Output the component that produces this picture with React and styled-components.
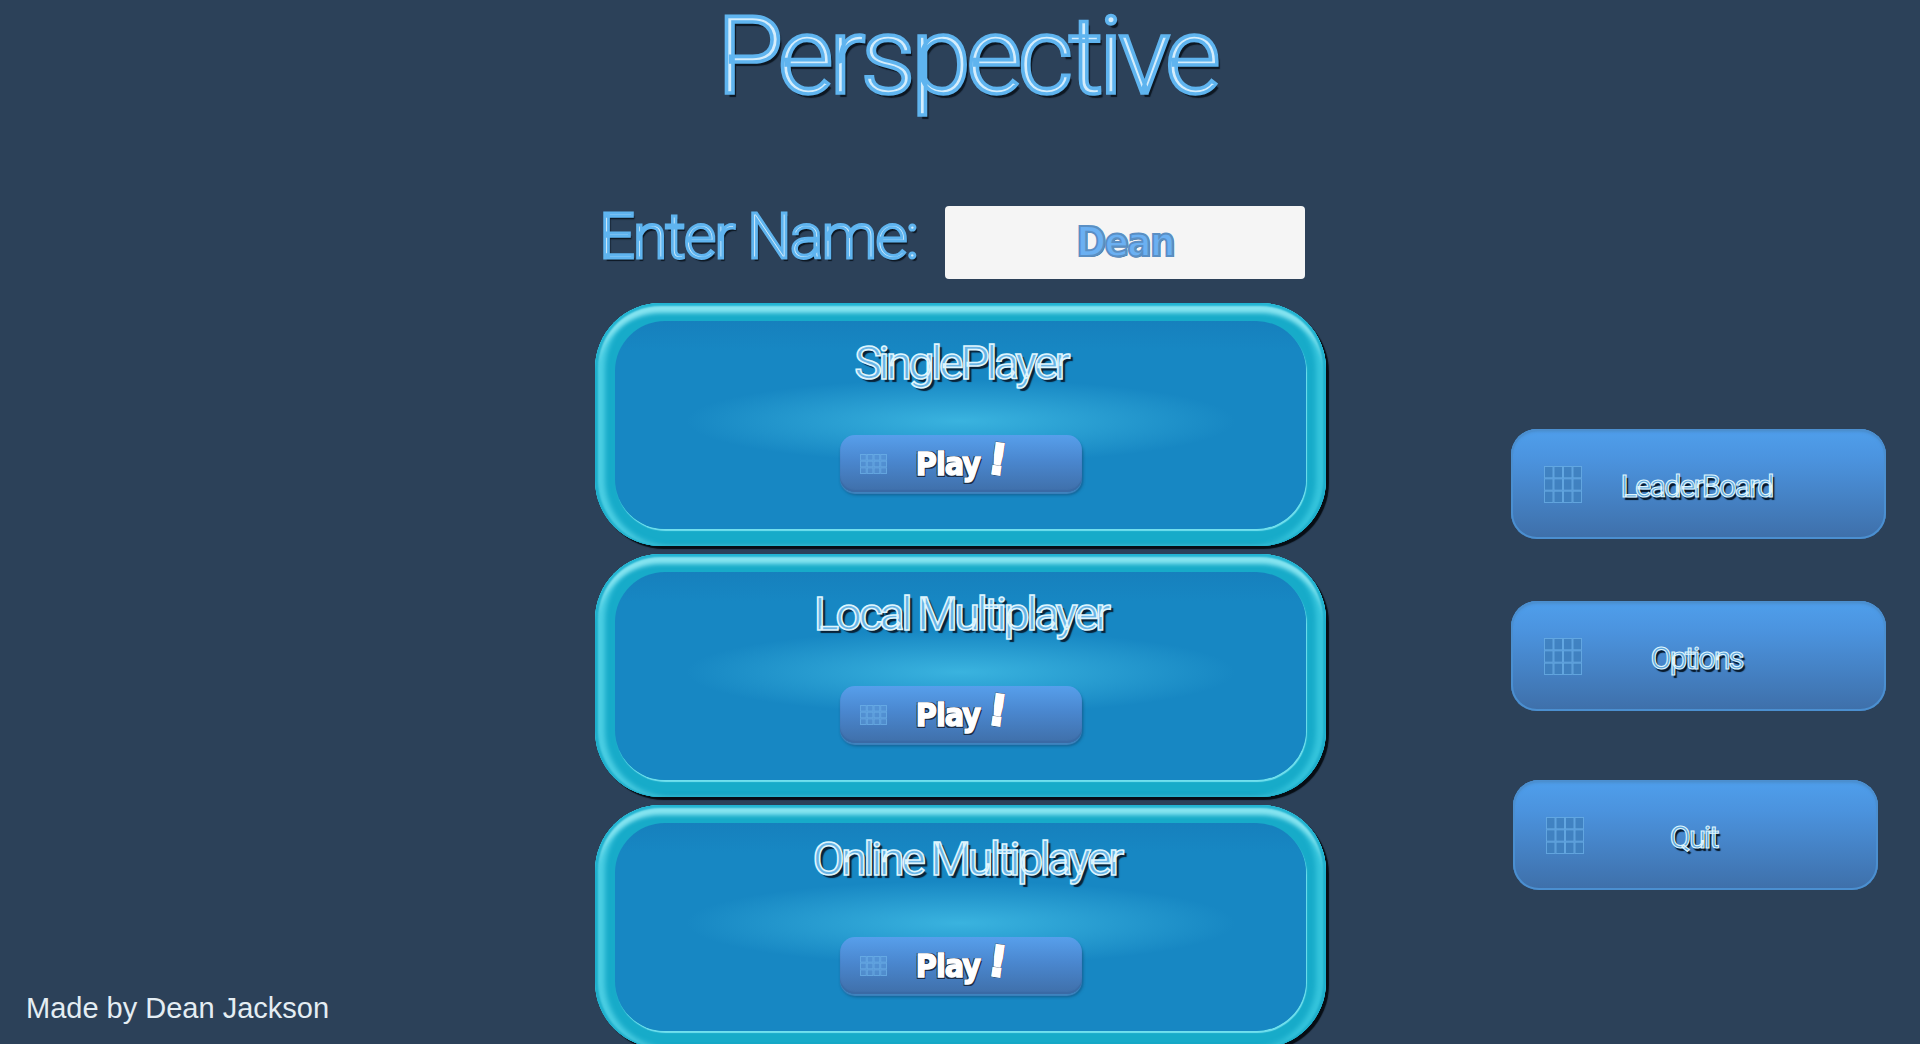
import React from 'react'
import styled, { createGlobalStyle } from 'styled-components'

const GlobalStyle = createGlobalStyle`
  html, body {
    margin: 0;
    padding: 0;
    background: #2c4159;
  }
`

const Page = styled.div`
  display: grid;
  grid-template-columns: 595px 731px 1fr;
  height: 1044px;
  overflow: hidden;
  background: #2c4159;
  font-family: "Liberation Sans", Arial, sans-serif;
`

const LeftColumn = styled.div`
  display: flex;
  align-items: flex-end;
  padding: 0 0 22px 26px;
`

const Credit = styled.div`
  font-size: 29px;
  line-height: 36px;
  color: #e4edf3;
`

const CenterColumn = styled.div`
  display: flex;
  flex-direction: column;
`

const Title = styled.h1`
  margin: 0;
  height: 140px;
  padding-left: 12px;
  text-align: center;
  font-family: Roboto, "Liberation Sans", sans-serif;
  font-weight: 300;
  font-size: 108px;
  line-height: 112px;
  letter-spacing: -4.6px;
  color: #d4edfc;
  -webkit-text-stroke: 3.6px #5fb4ef;
  text-shadow: 3px 4px 1px #0d1722;
`

const NameRow = styled.div`
  display: flex;
  align-items: center;
  gap: 28px;
  margin: 66px 20px 24px 4px;
  height: 73px;
`

const NameLabel = styled.label`
  margin-top: -12px;
  font-family: Roboto, "Liberation Sans", sans-serif;
  font-weight: 300;
  font-size: 63px;
  letter-spacing: -2px;
  white-space: nowrap;
  color: #d4edfc;
  -webkit-text-stroke: 2.8px #5fb4ef;
  text-shadow: 2px 3px 1px #0d1722;
`

const NameBox = styled.div`
  flex: none;
  width: 360px;
  height: 73px;
  display: flex;
  align-items: center;
  justify-content: center;
  padding-bottom: 2px;
  box-sizing: border-box;
  background: #f5f5f5;
  border-radius: 4px;
  font-family: "DejaVu Sans Condensed", "DejaVu Sans", sans-serif;
  font-weight: 700;
  font-size: 40px;
  letter-spacing: -1.6px;
  color: #6bb0f2;
  -webkit-text-stroke: 2px #5a8fc4;
  text-shadow: 1px 1px 0 #3d6387;
`

const Panels = styled.div`
  display: flex;
  flex-direction: column;
  gap: 8px;
`

const Panel = styled.section`
  flex: none;
  height: 243px;
  box-sizing: border-box;
  padding: 18px 20px 17px;
  border-radius: 66px;
  background: #17abc9;
  box-shadow:
    inset 0 3px 2px #22b4d2,
    inset 3px 0 2px #1eaecb,
    inset -3px 0 2px #1eaecb,
    inset 0 10px 4px #86e4f0,
    inset 10px 0 5px #4bcee3,
    inset -10px 0 5px #35c4dc,
    inset 0 -3px 3px #0f93b2,
    3px 3px 1px #070d14;
`

const PanelBody = styled.div`
  height: 100%;
  box-sizing: border-box;
  display: flex;
  flex-direction: column;
  align-items: center;
  border-radius: 50px;
  background:
    radial-gradient(
      ellipse 275px 42px at 50% 100px,
      #3ab3df,
      rgba(58, 179, 223, 0.55) 45%,
      rgba(58, 179, 223, 0) 100%
    ),
    linear-gradient(#1680bd, #1787c3 14%);
  box-shadow: 1px 2px 1px #72e0ee;
`

const PanelTitle = styled.h2`
  margin: ${(props) => 14 - (props.$lift || 0)}px 0 0;
  height: ${(props) => 67 + (props.$lift || 0)}px;
  padding-left: ${(props) => props.$shift || 0}px;
  font-family: Roboto, "Liberation Sans", sans-serif;
  font-weight: 400;
  font-size: 47px;
  line-height: 56px;
  letter-spacing: -3.7px;
  white-space: nowrap;
  color: #69b4e6;
  -webkit-text-stroke: 1.6px #dff5fd;
  text-shadow: 3px 3px 1px #082238;
`

const PlayButton = styled.button`
  flex: none;
  width: 242px;
  height: 57px;
  padding: 0 20px;
  margin-top: 33px;
  display: grid;
  grid-template-columns: 1fr auto 1fr;
  align-items: center;
  border: 0;
  border-radius: 15px;
  background: linear-gradient(#579feb, #4a87cf 45%, #3f6fa9);
  box-shadow:
    inset 0 -2px 1px #3a6aa5,
    0 2px 1px #3f83be,
    1px 3px 3px rgba(8, 50, 90, 0.5);
`

const PlayLabel = styled.span`
  font-family: "DejaVu Sans Condensed", "DejaVu Sans", sans-serif;
  font-weight: 700;
  font-size: 32px;
  letter-spacing: -1px;
  white-space: nowrap;
  color: #ffffff;
  -webkit-text-stroke: 1.4px #ffffff;
  text-shadow:
    1.5px 1.5px 0 #1b2e48,
    -1.5px 1.5px 0 #1b2e48,
    1.5px -1.5px 0 #1b2e48,
    -1.5px -1.5px 0 #1b2e48;
`

const Bang = styled.span`
  display: inline-block;
  margin-left: 9px;
  font-size: 42px;
  line-height: 30px;
  -webkit-text-stroke: 2.6px #ffffff;
  transform: rotate(8deg) translateY(-1px);
`

const RightColumn = styled.div`
  display: flex;
  flex-direction: column;
  align-items: flex-start;
  padding: 429px 0 0 185px;
`

const SideButton = styled.button`
  flex: none;
  width: ${(props) => (props.$narrow ? 365 : 375)}px;
  height: 110px;
  margin-left: ${(props) => (props.$narrow ? 2 : 0)}px;
  margin-bottom: ${(props) => props.$after || 0}px;
  padding: 0 33px;
  display: grid;
  grid-template-columns: 1fr auto 1fr;
  align-items: center;
  border: 0;
  border-radius: 26px;
  background: linear-gradient(#4f9fec, #4b93de 28%, #3e6fa9);
  box-shadow:
    inset 0 0 0 2px #4b8fd0,
    inset 0 3px 3px #4a8ed0;
`

const SideLabel = styled.span`
  margin-top: 4px;
  margin-right: 4px;
  font-family: Roboto, "Liberation Sans", sans-serif;
  font-weight: 400;
  font-size: 31px;
  letter-spacing: -2.2px;
  white-space: nowrap;
  color: #5ea6dc;
  -webkit-text-stroke: 1.1px #dff5fd;
  text-shadow: 2px 3px 1px #061626;
`

const GridIcon = ({ width, height, fill = '#3f80bd', fillOpacity = 0.8 }) => {
  const cols = [0, 1, 2, 3]
  const rows = [0, 1, 2]
  const cellW = width / 4
  const cellH = height / 3
  return (
    <svg width={width} height={height} viewBox={`0 0 ${width} ${height}`}>
      {cols.map((c) =>
        rows.map((r) => (
          <rect
            key={`${c}-${r}`}
            x={c * cellW + 0.5}
            y={r * cellH + 0.5}
            width={cellW - 1}
            height={cellH - 1}
            fill={fill}
            fillOpacity={fillOpacity}
            stroke="#6fb4ea"
            strokeOpacity="0.7"
            strokeWidth="1"
          />
        ))
      )}
    </svg>
  )
}

const modes = [
  { name: 'SinglePlayer', shift: 0, lift: 0 },
  { name: 'Local Multiplayer', shift: 0, lift: 0 },
  { name: 'Online Multiplayer', shift: 12, lift: 6 },
]

const App = () => {
  return (
    <Page>
      <GlobalStyle />
      <LeftColumn>
        <Credit>Made by Dean Jackson</Credit>
      </LeftColumn>
      <CenterColumn>
        <Title>Perspective</Title>
        <NameRow>
          <NameLabel>Enter Name:</NameLabel>
          <NameBox>Dean</NameBox>
        </NameRow>
        <Panels>
          {modes.map((mode) => (
            <Panel key={mode.name}>
              <PanelBody>
                <PanelTitle $shift={mode.shift} $lift={mode.lift}>
                  {mode.name}
                </PanelTitle>
                <PlayButton>
                  <GridIcon width={27} height={20} fill="#5a9ad8" fillOpacity={0.5} />
                  <PlayLabel>
                    Play<Bang>!</Bang>
                  </PlayLabel>
                </PlayButton>
              </PanelBody>
            </Panel>
          ))}
        </Panels>
      </CenterColumn>
      <RightColumn>
        <SideButton $after={62}>
          <GridIcon width={38} height={37} />
          <SideLabel>LeaderBoard</SideLabel>
        </SideButton>
        <SideButton $after={69}>
          <GridIcon width={38} height={37} />
          <SideLabel>Options</SideLabel>
        </SideButton>
        <SideButton $narrow>
          <GridIcon width={38} height={37} />
          <SideLabel>Quit</SideLabel>
        </SideButton>
      </RightColumn>
    </Page>
  )
}

export default App
